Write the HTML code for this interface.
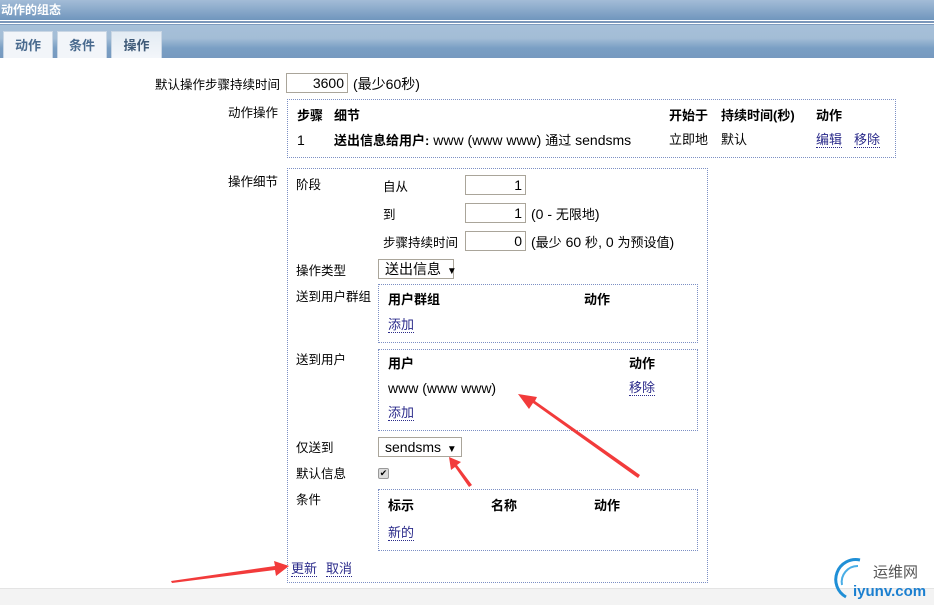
<!DOCTYPE html>
<html><head><meta charset="utf-8"><style>
*{margin:0;padding:0;box-sizing:border-box}
body{width:934px;height:605px;position:relative;overflow:hidden;background:#fff;font-family:"Liberation Sans","Noto Sans CJK SC",sans-serif;font-size:12px;color:#000}
.a{position:absolute;white-space:nowrap;line-height:14px}
.l{font-size:12.5px}
.t{font-size:14px}
.c{font-size:13px}
.hdr{position:absolute;left:0;top:0;width:934px;height:20px;background:linear-gradient(#a3bcd7,#7096bd);color:#fff;font-weight:bold;font-size:12px;line-height:20px;padding-left:1px}
.tabbar{position:absolute;left:0;top:24px;width:934px;height:34px;background:linear-gradient(#a7c0d9 0%,#a3bdd6 40%,#7a9fc4 70%,#7699bf);border-top:1px solid #7e9cbf}
.tab{position:absolute;top:31px;height:27px;background:#f2f5f9;border:1px solid #c9d6e4;border-bottom:none;color:#4a6b8f;font-weight:bold;font-size:13px;text-align:center;line-height:28px}
.box{position:absolute;border:1px dotted #7c8fc4}
.b{font-weight:bold;font-size:13px}
.lnk{color:#2a2a8a;border-bottom:1px dotted #2a2a8a}
.inp{position:absolute;border:1px solid #aaa59a;height:20px;background:#fff;text-align:right;padding-right:3px;line-height:18px;font-size:14px}
.sel{position:absolute;border:1px solid #aaa59a;height:20px;background:#fff;line-height:18px;padding-left:6px;font-size:14px;white-space:nowrap}
</style></head><body>
<div class="hdr">动作的组态</div>
<div style="position:absolute;left:0;top:20px;width:934px;height:1px;background:#fff"></div>
<div style="position:absolute;left:0;top:21px;width:934px;height:2px;background:#7b97ba"></div>
<div style="position:absolute;left:0;top:23px;width:934px;height:1px;background:#fff"></div>
<div class="tabbar"></div>
<div class="tab" style="left:3px;width:50px">动作</div>
<div class="tab" style="left:57px;width:50px">条件</div>
<div class="tab" style="left:111px;width:51px;background:linear-gradient(#e3ebf3,#f3f6fa);color:#3f5a78">操作</div>

<div class="a l" style="left:155px;top:78px">默认操作步骤持续时间</div>
<div class="inp" style="left:286px;top:73px;width:62px">3600</div>
<div class="a t" style="left:353px;top:77px">(最少60秒)</div>

<div class="a l" style="left:228px;top:106px">动作操作</div>
<div class="box" style="left:287px;top:99px;width:609px;height:59px"></div>
<div class="a b" style="left:297px;top:109px">步骤</div>
<div class="a b" style="left:334px;top:109px">细节</div>
<div class="a b" style="left:669px;top:109px">开始于</div>
<div class="a b" style="left:721px;top:109px">持续时间(秒)</div>
<div class="a b" style="left:816px;top:109px">动作</div>
<div class="a t" style="left:297px;top:133px">1</div>
<div class="a t" style="left:334px;top:133px"><b class="c">送出信息给用户:</b> www (www www) <span class="c">通过</span> sendsms</div>
<div class="a c" style="left:669px;top:133px">立即地</div>
<div class="a c" style="left:721px;top:133px">默认</div>
<div class="a lnk c" style="left:816px;top:133px">编辑</div>
<div class="a lnk c" style="left:854px;top:133px">移除</div>

<div class="a l" style="left:228px;top:175px">操作细节</div>
<div class="box" style="left:287px;top:168px;width:421px;height:415px"></div>
<div class="a l" style="left:296px;top:178px">阶段</div>
<div class="a l" style="left:383px;top:180px">自从</div>
<div class="inp" style="left:465px;top:175px;width:61px">1</div>
<div class="a l" style="left:383px;top:208px">到</div>
<div class="inp" style="left:465px;top:203px;width:61px">1</div>
<div class="a t" style="left:531px;top:207px">(0 - <span class="c">无限地</span>)</div>
<div class="a l" style="left:383px;top:236px">步骤持续时间</div>
<div class="inp" style="left:465px;top:231px;width:61px">0</div>
<div class="a t" style="left:531px;top:235px">(<span class="c">最少</span> 60 <span class="c">秒</span>, 0 <span class="c">为预设值</span>)</div>

<div class="a l" style="left:296px;top:264px">操作类型</div>
<div class="sel c" style="left:378px;top:259px;width:76px">送出信息 <span style="font-size:10px;margin-left:2px">▼</span></div>

<div class="a l" style="left:296px;top:290px">送到用户群组</div>
<div class="box" style="left:378px;top:284px;width:320px;height:59px"></div>
<div class="a b" style="left:388px;top:293px">用户群组</div>
<div class="a b" style="left:584px;top:293px">动作</div>
<div class="a lnk c" style="left:388px;top:318px">添加</div>

<div class="a l" style="left:296px;top:353px">送到用户</div>
<div class="box" style="left:378px;top:349px;width:320px;height:82px"></div>
<div class="a b" style="left:388px;top:357px">用户</div>
<div class="a b" style="left:629px;top:357px">动作</div>
<div class="a t" style="left:388px;top:381px">www (www www)</div>
<div class="a lnk c" style="left:629px;top:381px">移除</div>
<div class="a lnk c" style="left:388px;top:406px">添加</div>

<div class="a l" style="left:296px;top:441px">仅送到</div>
<div class="sel" style="left:378px;top:437px;width:84px">sendsms <span style="font-size:10px;margin-left:2px">▼</span></div>
<div class="a l" style="left:296px;top:467px">默认信息</div>
<div style="position:absolute;left:378px;top:468px;width:11px;height:11px;border:1px solid #999;border-radius:2px;background:#ddd;font-size:9px;line-height:9px;text-align:center">✔</div>
<div class="a l" style="left:296px;top:493px">条件</div>
<div class="box" style="left:378px;top:489px;width:320px;height:62px"></div>
<div class="a b" style="left:388px;top:499px">标示</div>
<div class="a b" style="left:491px;top:499px">名称</div>
<div class="a b" style="left:594px;top:499px">动作</div>
<div class="a lnk c" style="left:388px;top:526px">新的</div>
<div class="a lnk c" style="left:291px;top:562px">更新</div>
<div class="a lnk c" style="left:326px;top:562px">取消</div>

<div style="position:absolute;left:0;top:588px;width:934px;height:17px;background:#f3f3f3;border-top:1px solid #e4e4e4"></div>

<svg style="position:absolute;left:0;top:0" width="934" height="605">
<polygon points="638,478 533,403 529,409 518,394 537,397 535,401 640,475" fill="#f23b3b"/>
<polygon points="469,487 455,467 451,470 449,457 461,462 457,465 472,485" fill="#f23b3b"/>
<polygon points="172,583 275,570 276,576 289,566 274,561 275,566 171,581" fill="#f23b3b"/>
<path d="M846,597 A20,20 0 0 1 860,560" stroke="#1f8fd6" stroke-width="3" fill="none"/>
<path d="M842,585 A16,16 0 0 1 858,566" stroke="#4aaee6" stroke-width="2" fill="none"/>
<text x="873" y="577" font-size="15" fill="#555" font-family="Noto Sans CJK SC,sans-serif">运维网</text>
<text x="853" y="596" font-size="15" fill="#1a7fd0" font-weight="bold" font-family="Liberation Sans,sans-serif">iyunv.com</text>
</svg>
</body></html>
